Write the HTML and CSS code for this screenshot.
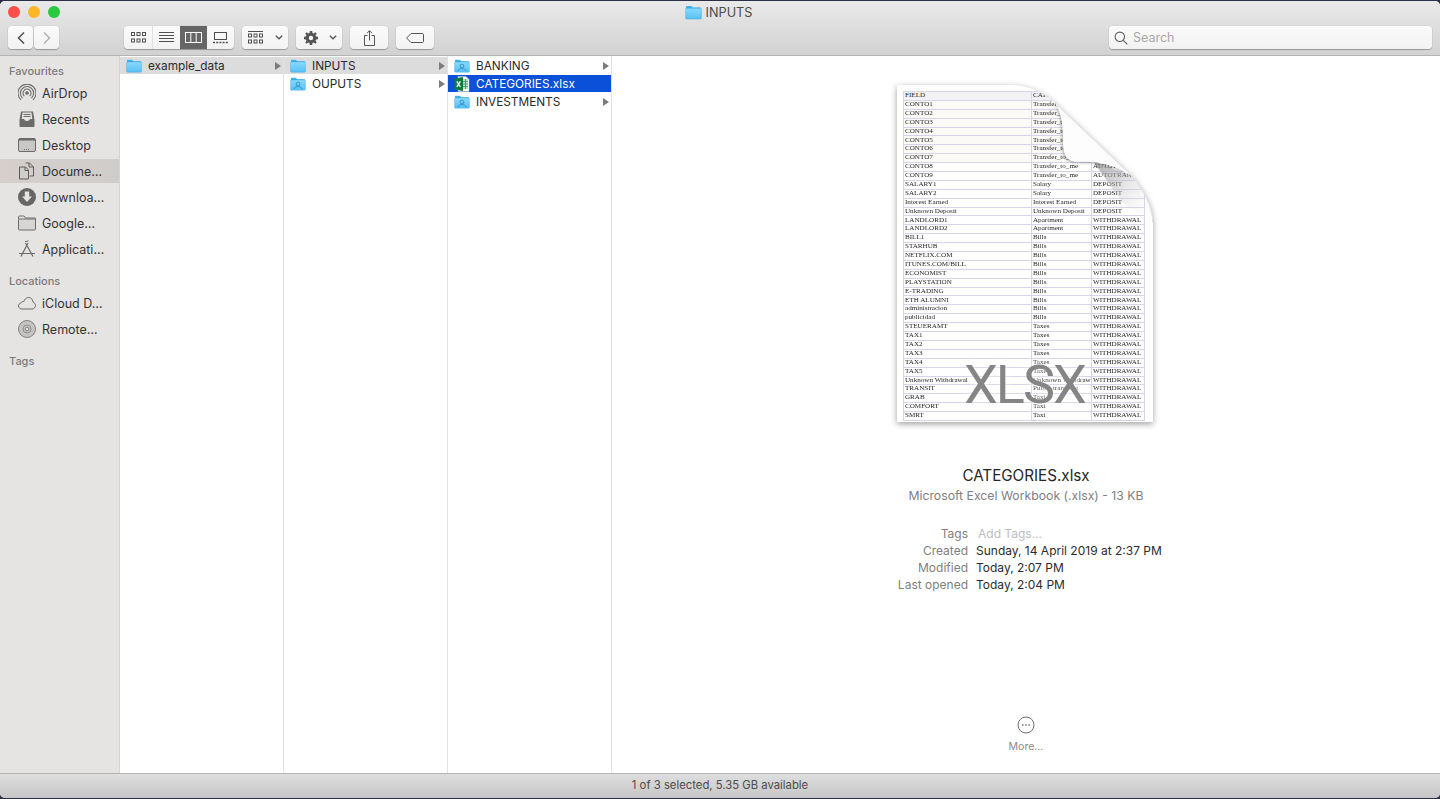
FILE: index.html
```html
<!DOCTYPE html>
<html lang="en">
<head>
  <meta charset="UTF-8" />
  <title>INPUTS</title>
  <link rel="stylesheet" href="styles.css">
</head>
<body>
  <svg class="defs" width="0" height="0">
    <defs>
      <linearGradient id="folderBack" x1="0" y1="0" x2="0" y2="1">
        <stop offset="0" stop-color="#3fb8f2" />
        <stop offset="1" stop-color="#2fa6e8" />
      </linearGradient>
      <linearGradient id="folderFront" x1="0" y1="0" x2="0" y2="1">
        <stop offset="0" stop-color="#8adafc" />
        <stop offset="1" stop-color="#57c0f5" />
      </linearGradient>
      <symbol id="folder" viewBox="0 0 16 14">
        <path d="M1 3V1.8C1 1.2 1.4.8 2 .8h3.6c.5 0 .7.2 1 .6l.6.8H14c.6 0 1 .4 1 1V4H1z" fill="url(#folderBack)" />
        <path d="M.6 3.6c0-.4.3-.7.7-.7h13.4c.4 0 .7.3.7.7v8.7c0 .5-.4.9-.9.9H1.5c-.5 0-.9-.4-.9-.9z" fill="url(#folderFront)" stroke="#35a5e4" stroke-width=".4" />
      </symbol>
      <symbol id="folderUser" viewBox="0 0 16 14">
        <use href="#folder" width="16" height="14" />
        <circle cx="8" cy="7" r="1.9" fill="none" stroke="#2a86bd" stroke-width=".8" />
        <path d="M4 12c.2-1.8 1.8-2.4 4-2.4s3.800.6 4 2.400" fill="none" stroke="#2a86bd" stroke-width=".8" />
      </symbol>
    </defs>
  </svg>

  <div class="window">
    <header class="chrome">
      <div class="titlebar">
        <div class="lights">
          <span class="light red"></span>
          <span class="light yellow"></span>
          <span class="light green"></span>
        </div>
        <div class="title">
          <svg class="title-folder" width="17" height="15"><use href="#folder" /></svg>
          <span>INPUTS</span>
        </div>
      </div>
      <div class="toolbar">
        <div class="btn-pair">
          <button class="tool nav">
            <svg width="10" height="14" viewBox="0 0 10 14"><path d="M8 1.500 2.500 7 8 12.500" fill="none" stroke="#4c4c4c" stroke-width="1.500" /></svg>
          </button>
          <button class="tool nav">
            <svg width="10" height="14" viewBox="0 0 10 14"><path d="M2 1.500 7.500 7 2 12.500" fill="none" stroke="#b2b2b2" stroke-width="1.500" /></svg>
          </button>
        </div>
        <div class="segments">
          <button class="seg seg-icons">
            <svg width="15" height="11" viewBox="0 0 15 11" fill="none" stroke="#4f4f4f"><rect x=".5" y=".5" width="3" height="3" /><rect x="6" y=".5" width="3" height="3" /><rect x="11.500" y=".5" width="3" height="3" /><rect x=".5" y="7" width="3" height="3" /><rect x="6" y="7" width="3" height="3" /><rect x="11.500" y="7" width="3" height="3" /></svg>
          </button>
          <button class="seg seg-list">
            <svg width="15" height="11" viewBox="0 0 15 11" stroke="#4f4f4f"><path d="M0 .5h15M0 3.500h15M0 6.500h15M0 9.500h15" /></svg>
          </button>
          <button class="seg seg-active">
            <svg width="17" height="11" viewBox="0 0 17 11" fill="none" stroke="#fff"><rect x=".5" y=".5" width="16" height="10" /><path d="M5.800 0v11M11.200 0v11" /></svg>
          </button>
          <button class="seg seg-gallery">
            <svg width="15" height="12" viewBox="0 0 15 12" fill="none" stroke="#4f4f4f"><rect x="1.500" y=".5" width="12" height="7" /><path d="M0 10.500h2M3.200 10.500h2M6.400 10.500h2M9.600 10.500h2M12.800 10.500h2" stroke-width="1.500" /></svg>
          </button>
        </div>
        <button class="tool group-btn">
          <svg width="15" height="13" viewBox="0 0 15 13" fill="none" stroke="#4f4f4f"><path d="M0 .5h15" /><rect x=".5" y="3" width="3" height="3" /><rect x="6" y="3" width="3" height="3" /><rect x="11.500" y="3" width="3" height="3" /><rect x=".5" y="9" width="3" height="3" /><rect x="6" y="9" width="3" height="3" /><rect x="11.500" y="9" width="3" height="3" /></svg>
          <svg width="8" height="5" viewBox="0 0 8 5"><path d="M.8.8 4 3.800 7.200.8" fill="none" stroke="#555" stroke-width="1.300" /></svg>
        </button>
        <button class="tool gear-btn">
          <svg width="14" height="14" viewBox="0 0 14 14"><path fill="#555" fill-rule="evenodd" d="M5.800 0h2.400l.3 1.900 1.300.5L11.400 1.300l1.300 1.300-1.100 1.600.5 1.300 1.900.3v2.400l-1.900.3-.5 1.300 1.100 1.600-1.300 1.300-1.600-1.100-1.300.5-.3 1.900H5.800l-.3-1.900-1.300-.5-1.600 1.100-1.300-1.300 1.100-1.600-.5-1.300L0 8.200V5.800l1.900-.3.5-1.300L1.300 2.600l1.300-1.300 1.600 1.100 1.300-.5zM7 4.800a2.200 2.200 0 1 0 0 4.400 2.200 2.200 0 0 0 0-4.400z" /></svg>
          <svg width="8" height="5" viewBox="0 0 8 5"><path d="M.8.8 4 3.800 7.200.8" fill="none" stroke="#555" stroke-width="1.300" /></svg>
        </button>
        <button class="tool share-btn">
          <svg width="11" height="16" viewBox="0 0 11 16" fill="none" stroke="#555"><path d="M3.500 5.500H.5v10h10v-10h-3" /><path d="M5.500 10.500V.8M3 3.200 5.500.7 8 3.200" /></svg>
        </button>
        <button class="tool tag-btn">
          <svg width="18" height="10" viewBox="0 0 18 10" fill="none" stroke="#555"><path d="M5 .5h11.500c.6 0 1 .4 1 1v7c0 .6-.4 1-1 1H5L.6 5z" /></svg>
        </button>
        <label class="search">
          <svg width="14" height="14" viewBox="0 0 14 14" fill="none" stroke="#5f5f5f" stroke-width="1.100"><circle cx="5.800" cy="5.800" r="4.700" /><path d="M9.300 9.300l4 4" /></svg>
          <span>Search</span>
        </label>
      </div>
    </header>

    <div class="body">
      <aside class="sidebar">
        <h4 class="side-head">Favourites</h4>
        <div class="side-item">
          <svg width="18" height="18" viewBox="0 0 18 18" fill="none" stroke="#6b6b6b"><circle cx="9" cy="9" r="1.300" fill="#6b6b6b" /><path d="M6.300 12a4 4 0 1 1 5.400 0M4.500 14a6.600 6.600 0 1 1 9 0M3 15.800A9 9 0 1 1 15 15.800" stroke-width="1.100" /></svg>
          <span>AirDrop</span>
        </div>
        <div class="side-item">
          <svg width="18" height="18" viewBox="0 0 18 18"><path fill="#6b6b6b" d="M3 1.500h12l1.500 8.500v6c0 .6-.4 1-1 1h-13c-.6 0-1-.4-1-1v-6z" /><path fill="#e6e4e3" d="M4.500 2.500h9l.8 6.500h-2.300c-.3 1.300-1.400 2-3 2s-2.700-.7-3-2H3.700z" /><path stroke="#6b6b6b" d="M5.500 4.500h7M5.500 6.500h7" /></svg>
          <span>Recents</span>
        </div>
        <div class="side-item">
          <svg width="18" height="18" viewBox="0 0 18 18"><rect x=".5" y="2.500" width="17" height="13" rx="1.500" fill="#c9c7c6" stroke="#6b6b6b" /><path fill="#6b6b6b" d="M1 3h16v1.500H1z" /><path stroke="#6b6b6b" stroke-dasharray="1 1" d="M6 13.500h6" /></svg>
          <span>Desktop</span>
        </div>
        <div class="side-item active">
          <svg width="18" height="18" viewBox="0 0 18 18" fill="none" stroke="#5c5c5c"><path d="M7.500 1h4l4 4v9h-4" /><path d="M11 1v4h4.500" /><path d="M1.500 5h6l3 3v9h-9z" fill="#d0ccca" /><path d="M7 5v3.500h3.500" /></svg>
          <span>Docume…</span>
        </div>
        <div class="side-item">
          <svg width="18" height="18" viewBox="0 0 18 18"><circle cx="9" cy="9" r="9" fill="#666" /><path fill="#e6e4e3" d="M6.800 3.500h4.400v5H14l-5 5.500-5-5.500h2.800z" /></svg>
          <span>Downloa…</span>
        </div>
        <div class="side-item">
          <svg width="18" height="18" viewBox="0 0 18 18" fill="none" stroke="#6b6b6b"><path d="M.5 5V3c0-.6.4-1 1-1h4.600l1.400 2h10v2" /><rect x=".5" y="5" width="17" height="11" rx="1" fill="#d8d6d5" /></svg>
          <span>Google…</span>
        </div>
        <div class="side-item">
          <svg width="18" height="18" viewBox="0 0 18 18" fill="none" stroke="#6b6b6b" stroke-width="1.200"><path d="M7.500 3 15 16.500M10 3 3 16.500M1 13.500h16" /><path d="M7 1.500 10.500 1" /></svg>
          <span>Applicati…</span>
        </div>
        <h4 class="side-head gap">Locations</h4>
        <div class="side-item">
          <svg width="18" height="18" viewBox="0 0 18 18" fill="none" stroke="#6b6b6b"><path d="M4 15c-2 0-3.500-1.300-3.500-3 0-1.500 1-2.700 2.400-3 .6-1.300 1.700-1.700 2.800-1.300C6.500 5.500 8.100 3.500 10.500 3.500c2.700 0 4.400 2 4.400 4.500 1.500.5 2.600 1.800 2.600 3.400 0 2-1.500 3.600-3.500 3.600z" /></svg>
          <span>iCloud D…</span>
        </div>
        <div class="side-item">
          <svg width="18" height="18" viewBox="0 0 18 18"><circle cx="9" cy="9" r="8.500" fill="#c6c4c3" stroke="#808080" /><circle cx="9" cy="9" r="4" fill="none" stroke="#8e8e8e" /><circle cx="9" cy="9" r="1.800" fill="#e6e4e3" stroke="#808080" /></svg>
          <span>Remote…</span>
        </div>
        <h4 class="side-head gap">Tags</h4>
      </aside>

      <section class="column">
        <div class="row open">
          <svg class="row-icon" width="16" height="14"><use href="#folder" /></svg>
          <span class="row-name">example_data</span>
          <i class="arrow"></i>
        </div>
      </section>
      <section class="column">
        <div class="row open">
          <svg class="row-icon" width="16" height="14"><use href="#folder" /></svg>
          <span class="row-name">INPUTS</span>
          <i class="arrow"></i>
        </div>
        <div class="row">
          <svg class="row-icon" width="16" height="14"><use href="#folderUser" /></svg>
          <span class="row-name">OUPUTS</span>
          <i class="arrow"></i>
        </div>
      </section>
      <section class="column">
        <div class="row">
          <svg class="row-icon" width="16" height="14"><use href="#folderUser" /></svg>
          <span class="row-name">BANKING</span>
          <i class="arrow"></i>
        </div>
        <div class="row selected">
          <svg class="row-icon" width="16" height="16" viewBox="0 0 16 16">
            <path d="M4 .5h8l3 3v12H4z" fill="#fff" stroke="#b8c4bc" stroke-width=".5" />
            <path d="M9 3h5v10H9z" fill="#bfe3c8" />
            <path d="M9 5.500h5M9 8h5M9 10.500h5M11.500 3v10" stroke="#1f8a47" stroke-width=".7" />
            <path d="M.5 2.500 9 1v14L.5 13.500z" fill="#127a3c" />
            <path d="M2.800 5.300 6.400 10.800M6.400 5.300 2.800 10.800" stroke="#fff" stroke-width="1.200" />
          </svg>
          <span class="row-name">CATEGORIES.xlsx</span>
        </div>
        <div class="row">
          <svg class="row-icon" width="16" height="14"><use href="#folderUser" /></svg>
          <span class="row-name">INVESTMENTS</span>
          <i class="arrow"></i>
        </div>
      </section>

      <section class="preview">
        <div class="sheet-wrap">
          <div class="sheet">
            <table class="grid">
              <tr class="head"><td>FIELD</td><td>CATEGORY</td><td>TYPE</td></tr>
              <tr><td>CONTO1</td><td>Transfer_to_me</td><td>AUTOTRANSFER</td></tr>
              <tr><td>CONTO2</td><td>Transfer_to_me</td><td>AUTOTRANSFER</td></tr>
              <tr><td>CONTO3</td><td>Transfer_to_me</td><td>AUTOTRANSFER</td></tr>
              <tr><td>CONTO4</td><td>Transfer_to_me</td><td>AUTOTRANSFER</td></tr>
              <tr><td>CONTO5</td><td>Transfer_to_me</td><td>AUTOTRANSFER</td></tr>
              <tr><td>CONTO6</td><td>Transfer_to_me</td><td>AUTOTRANSFER</td></tr>
              <tr><td>CONTO7</td><td>Transfer_to_me</td><td>AUTOTRANSFER</td></tr>
              <tr><td>CONTO8</td><td>Transfer_to_me</td><td>AUTOTRANSFER</td></tr>
              <tr><td>CONTO9</td><td>Transfer_to_me</td><td>AUTOTRANSFER</td></tr>
              <tr><td>SALARY1</td><td>Salary</td><td>DEPOSIT</td></tr>
              <tr><td>SALARY2</td><td>Salary</td><td>DEPOSIT</td></tr>
              <tr><td>Interest Earned</td><td>Interest Earned</td><td>DEPOSIT</td></tr>
              <tr><td>Unknown Deposit</td><td>Unknown Deposit</td><td>DEPOSIT</td></tr>
              <tr><td>LANDLORD1</td><td>Apartment</td><td>WITHDRAWAL</td></tr>
              <tr><td>LANDLORD2</td><td>Apartment</td><td>WITHDRAWAL</td></tr>
              <tr><td>BILL1</td><td>Bills</td><td>WITHDRAWAL</td></tr>
              <tr><td>STARHUB</td><td>Bills</td><td>WITHDRAWAL</td></tr>
              <tr><td>NETFLIX.COM</td><td>Bills</td><td>WITHDRAWAL</td></tr>
              <tr><td>ITUNES.COM/BILL</td><td>Bills</td><td>WITHDRAWAL</td></tr>
              <tr><td>ECONOMIST</td><td>Bills</td><td>WITHDRAWAL</td></tr>
              <tr><td>PLAYSTATION</td><td>Bills</td><td>WITHDRAWAL</td></tr>
              <tr><td>E-TRADING</td><td>Bills</td><td>WITHDRAWAL</td></tr>
              <tr><td>ETH ALUMNI</td><td>Bills</td><td>WITHDRAWAL</td></tr>
              <tr><td>administracion</td><td>Bills</td><td>WITHDRAWAL</td></tr>
              <tr><td>publicidad</td><td>Bills</td><td>WITHDRAWAL</td></tr>
              <tr><td>STEUERAMT</td><td>Taxes</td><td>WITHDRAWAL</td></tr>
              <tr><td>TAX1</td><td>Taxes</td><td>WITHDRAWAL</td></tr>
              <tr><td>TAX2</td><td>Taxes</td><td>WITHDRAWAL</td></tr>
              <tr><td>TAX3</td><td>Taxes</td><td>WITHDRAWAL</td></tr>
              <tr><td>TAX4</td><td>Taxes</td><td>WITHDRAWAL</td></tr>
              <tr><td>TAX5</td><td>Taxes</td><td>WITHDRAWAL</td></tr>
              <tr><td>Unknown Withdrawal</td><td>Unknown Withdrawal</td><td>WITHDRAWAL</td></tr>
              <tr><td>TRANSIT</td><td>Public transport</td><td>WITHDRAWAL</td></tr>
              <tr><td>GRAB</td><td>Taxi</td><td>WITHDRAWAL</td></tr>
              <tr><td>COMFORT</td><td>Taxi</td><td>WITHDRAWAL</td></tr>
              <tr><td>SMRT</td><td>Taxi</td><td>WITHDRAWAL</td></tr>
            </table>
            <svg class="curl" width="258" height="140" viewBox="0 0 258 140">
              <defs>
                <linearGradient id="flap" x1="0" y1="1" x2="1" y2="0">
                  <stop offset="0" stop-color="#fff" />
                  <stop offset=".62" stop-color="#fbfbfb" />
                  <stop offset="1" stop-color="#d2d2d2" />
                </linearGradient>
                <linearGradient id="under" x1="0" y1="0" x2="1" y2="1">
                  <stop offset="0" stop-color="#8f8f8f" stop-opacity=".8" />
                  <stop offset="1" stop-color="#fff" stop-opacity="0" />
                </linearGradient>
              </defs>
              <path d="M196 76 236 92C248 108 255 120 256 138L226 118Z" fill="url(#under)" />
              <path class="flap" d="M158 18C165 28 166 42 166 58C166 70 170 77 182 77C200 76 218 80 236 92Z" fill="url(#flap)" />
              <path d="M160 20 236 92C248 108 255 120 256 138" fill="none" stroke="#d4d4d4" />
            </svg>
            <span class="badge">XLSX</span>
          </div>
        </div>

        <h2 class="file-name">CATEGORIES.xlsx</h2>
        <p class="file-kind">Microsoft Excel Workbook (.xlsx) - 13 KB</p>

        <dl class="meta">
          <dt>Tags</dt><dd class="placeholder">Add Tags...</dd>
          <dt>Created</dt><dd>Sunday, 14 April 2019 at 2:37 PM</dd>
          <dt>Modified</dt><dd>Today, 2:07 PM</dd>
          <dt>Last opened</dt><dd>Today, 2:04 PM</dd>
        </dl>

        <div class="more">
          <svg width="18" height="18" viewBox="0 0 18 18" fill="none" stroke="#6e6e6e"><circle cx="9" cy="9" r="8" /><path d="M5 9h1.500M8.200 9h1.500M11.400 9h1.500" stroke-width="1.300" /></svg>
          <span>More...</span>
        </div>
      </section>
    </div>

    <footer class="statusbar">1 of 3 selected, 5.35 GB available</footer>
  </div>
</body>
</html>
```

FILE: styles.css
```css
* { box-sizing: border-box; margin: 0; padding: 0; }

html, body { height: 100%; }

body {
  background: #2b3048;
  font-family: "Inter", "Liberation Sans", sans-serif;
  font-size: 12.5px;
  color: #2a2a2a;
  overflow: hidden;
  padding-top: 1px;
}

.defs { position: absolute; }

.window {
  height: 797px;
  display: flex;
  flex-direction: column;
  background: #fff;
  border-radius: 5px;
  overflow: hidden;
}

/* title bar + toolbar */
.chrome {
  height: 55px;
  flex: none;
  background: linear-gradient(#e9e9e9, #d2d2d2);
  border-bottom: 1px solid #b4b4b4;
}

.titlebar {
  height: 23px;
  position: relative;
  display: flex;
  justify-content: center;
  align-items: center;
}

.lights {
  position: absolute;
  left: 8px;
  top: 5px;
  display: flex;
  gap: 8px;
}

.light { width: 12px; height: 12px; border-radius: 50%; }
.red { background: #fc4d49; }
.yellow { background: #fdb627; }
.green { background: #27c93f; }

.title {
  display: flex;
  align-items: center;
  gap: 4px;
  color: #4a4a4a;
  font-size: 12.7px;
  margin-left: -3px;
}

.toolbar {
  height: 31px;
  display: flex;
  align-items: flex-start;
  padding: 2px 8px 0;
}

button { border: none; font: inherit; }

.tool, .segments, .search {
  height: 23px;
  background: linear-gradient(#fbfbfb, #f2f2f2);
  border-radius: 4px;
  box-shadow: 0 1px 1px rgba(0, 0, 0, 0.28), 0 0 0 0.5px rgba(0, 0, 0, 0.06);
}

.tool {
  display: flex;
  align-items: center;
  justify-content: center;
}

.btn-pair { display: flex; gap: 1px; margin-right: 65px; }
.nav { width: 25px; }

.segments {
  display: flex;
  overflow: hidden;
  width: 110px;
  margin-right: 8px;
}

.seg {
  display: flex;
  align-items: center;
  justify-content: center;
  background: none;
}

.seg-icons { width: 29px; border-right: 1px solid #e0e0e0; }
.seg-list { width: 27px; }
.seg-active { width: 27px; background: #666; }
.seg-gallery { width: 27px; }

.group-btn { width: 46px; gap: 12px; margin-right: 8px; }
.gear-btn { width: 46px; gap: 11px; margin-right: 8px; padding-left: 2px; }
.share-btn { width: 38px; margin-right: 8px; }
.tag-btn { width: 38px; }

.search {
  width: 323px;
  margin-left: auto;
  display: flex;
  align-items: center;
  gap: 5px;
  padding-left: 5px;
  color: #a8a8a8;
  font-size: 12.5px;
}

/* main area */
.body {
  flex: 1;
  min-height: 0;
  display: flex;
}

.sidebar {
  width: 120px;
  flex: none;
  background: #e6e4e3;
  border-right: 1px solid #d4d4d4;
  padding-top: 6px;
}

.side-head {
  height: 18px;
  line-height: 19px;
  padding-left: 9px;
  font-size: 11px;
  font-weight: 500;
  color: #7c7a79;
}

.side-head.gap { margin-top: 10px; }

.side-item {
  height: 26px;
  display: flex;
  align-items: center;
  gap: 6px;
  padding-left: 18px;
  color: #333;
  font-size: 12.5px;
  white-space: nowrap;
}

.side-item.active {
  height: 24px;
  margin: 1px 0;
  background: linear-gradient(90deg, #d6cfcc, #cfcdcb);
}

.column {
  width: 164px;
  flex: none;
  border-right: 1px solid #e2e2e2;
  padding-top: 1px;
}

.row {
  height: 17px;
  margin-bottom: 1px;
  display: flex;
  align-items: center;
  padding: 0 2px 0 6px;
  gap: 6px;
  color: #2a2a2a;
  font-size: 11.8px;
}

.row.open { background: #dcdcdc; }
.row.selected { background: #0a50d8; color: #fff; }

.row-name { flex: 1; }

.arrow {
  width: 0;
  height: 0;
  border-left: 6px solid #7b7b7b;
  border-top: 4px solid transparent;
  border-bottom: 4px solid transparent;
}

.preview {
  flex: 1;
  display: flex;
  flex-direction: column;
  align-items: center;
  padding-top: 29px;
  padding-bottom: 20px;
  min-width: 0;
}

.sheet-wrap {
  flex: none;
  margin-left: -2px;
  filter: drop-shadow(0 2px 3px rgba(0, 0, 0, 0.38));
}

/* the page corner is clipped away, the flap is drawn on top of it */
.sheet {
  position: relative;
  width: 256px;
  height: 337px;
  background: #fff;
  padding: 6px 0 0 6px;
  clip-path: path("M0 0H113C133 0 148 8 160 20L236 92C248 108 255 120 256 138V337H0Z");
}

.grid {
  width: 242px;
  table-layout: fixed;
  border-collapse: collapse;
  font-family: "Liberation Serif", serif;
  font-size: 7.1px;
  color: #262626;
  filter: blur(0.3px);
}

.grid tr { height: 8.9px; }
.grid .head { background: #f2f2f5; }
.grid tr:nth-child(n+2):nth-child(-n+8) { background: #fbfaf6; }

.grid td {
  border: 1px solid #d6d4e8;
  padding: 0 1px;
  line-height: 7.800px;
  white-space: nowrap;
  overflow: hidden;
}

.grid td:first-child { width: 128px; }
.grid td:nth-child(2) { width: 60px; }

.curl {
  position: absolute;
  top: 0;
  left: 0;
}

.flap { filter: drop-shadow(-1px 1px 1.500px rgba(0, 0, 0, 0.3)); }

.badge {
  position: absolute;
  left: 67px;
  top: 270px;
  font-family: "Roboto", "Liberation Sans", sans-serif;
  font-weight: 400;
  font-size: 54px;
  line-height: 60px;
  letter-spacing: -2px;
  color: #858585;
  text-shadow: 0 0 8px rgba(255, 255, 255, 0.9);
}

.file-name {
  margin-top: 44px;
  font-size: 15.2px;
  line-height: 20px;
  font-weight: 400;
  color: #262626;
}

.file-kind {
  margin-top: 1px;
  font-size: 12.25px;
  line-height: 18px;
  color: #808080;
}

.meta {
  width: 300px;
  margin-top: 20px;
  display: grid;
  grid-template-columns: 92px 1fr;
  column-gap: 8px;
  grid-auto-rows: 17px;
  font-size: 12px;
  line-height: 17px;
}

.meta dt { text-align: right; color: #808080; white-space: nowrap; }
.meta dd { color: #2c2c2c; }
.meta .placeholder { color: #bdbdbd; padding-left: 2px; }

.more {
  margin-top: auto;
  display: flex;
  flex-direction: column;
  align-items: center;
  gap: 6px;
  font-size: 10.5px;
  color: #8a8a8a;
}

.statusbar {
  height: 25px;
  flex: none;
  display: flex;
  align-items: center;
  justify-content: center;
  padding-bottom: 2px;
  background: linear-gradient(#dedede, #c6c6c6);
  border-top: 1px solid #b4b4b4;
  font-size: 11.3px;
  color: #4c4c4c;
}
```
